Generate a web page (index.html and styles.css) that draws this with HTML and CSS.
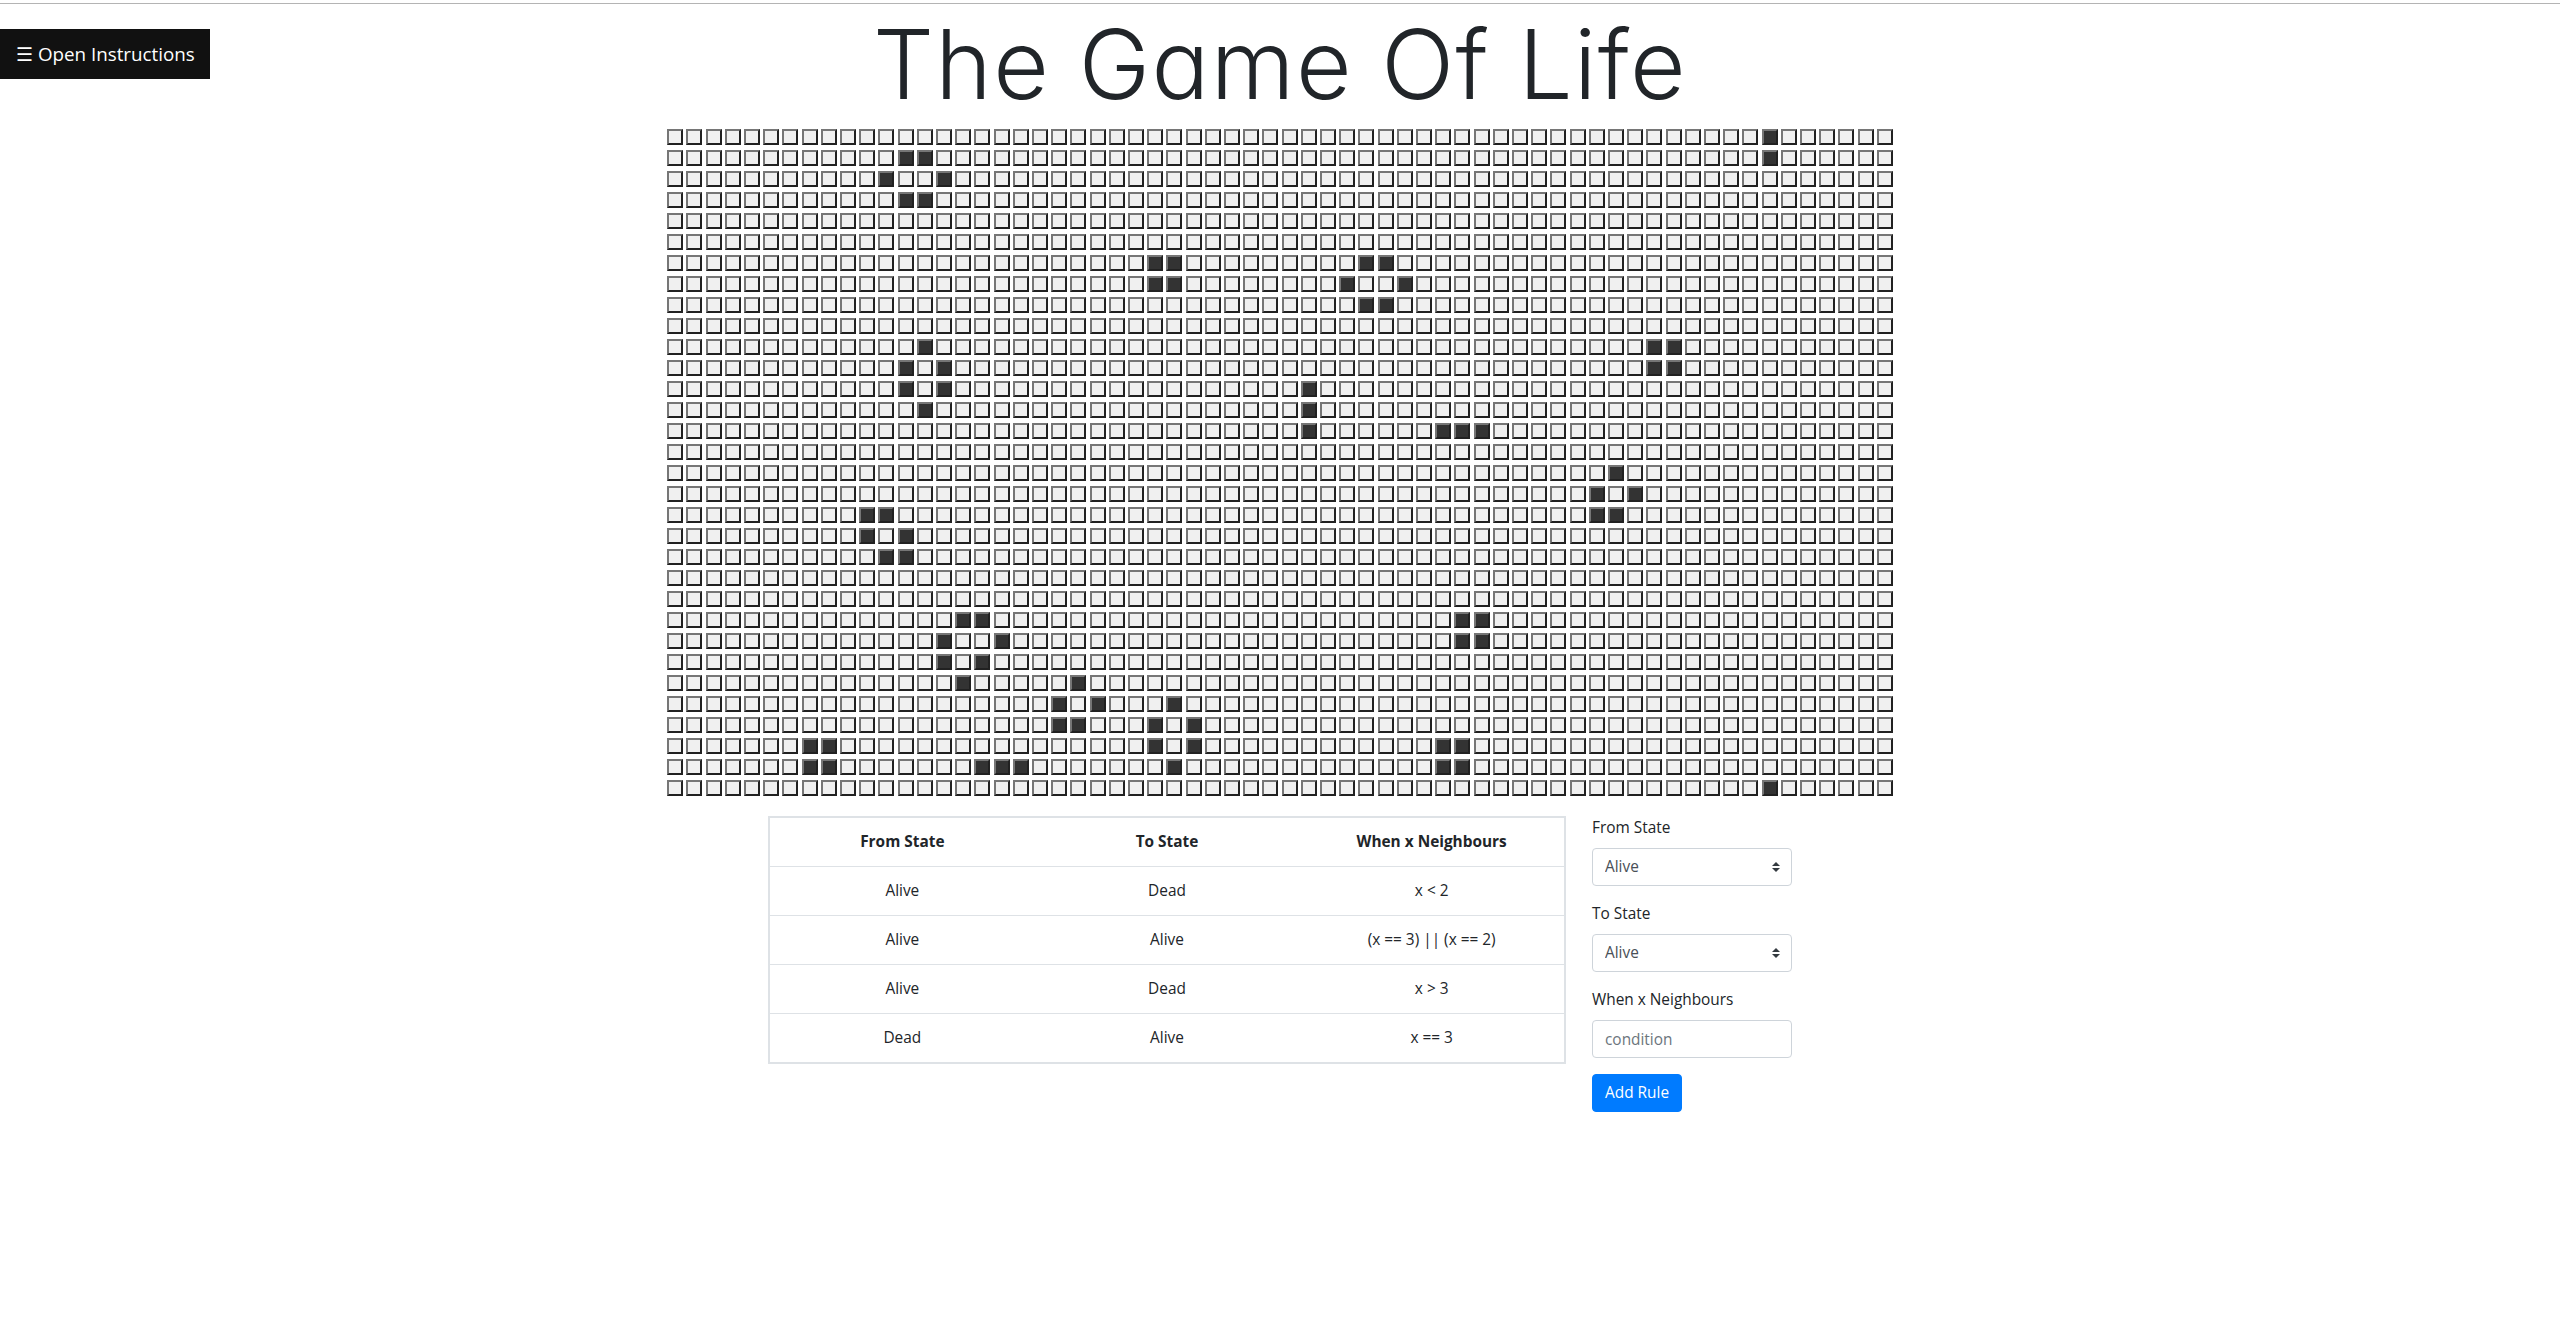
FILE: index.html
```html
<!DOCTYPE html>
<html lang="en">
<head>
<meta charset="utf-8">
<title>The Game Of Life</title>
<link rel="stylesheet" href="styles.css">
</head>
<body>
<div class="topline"></div>
<button class="open-btn" type="button">&#9776; Open Instructions</button>
<h1 class="title">The Game Of Life</h1>
<div class="board" id="board"></div>
<div class="lower">
  <div class="rules">
    <table class="rules-table">
      <thead>
        <tr><th>From State</th><th>To State</th><th>When x Neighbours</th></tr>
      </thead>
      <tbody>
        <tr><td>Alive</td><td>Dead</td><td>x &lt; 2</td></tr>
        <tr><td>Alive</td><td>Alive</td><td>(x == 3) || (x == 2)</td></tr>
        <tr><td>Alive</td><td>Dead</td><td>x &gt; 3</td></tr>
        <tr><td>Dead</td><td>Alive</td><td>x == 3</td></tr>
      </tbody>
    </table>
  </div>
  <form class="rule-form">
    <div class="group">
      <label class="lbl">From State</label>
      <div class="select-wrap">
        <select class="control select"><option>Alive</option><option>Dead</option></select>
        <svg class="arrows" viewBox="0 0 4 5"><path d="M2 0L0 2h4zm0 5L0 3h4z" fill="#343a40"/></svg>
      </div>
    </div>
    <div class="group">
      <label class="lbl">To State</label>
      <div class="select-wrap">
        <select class="control select"><option>Alive</option><option>Dead</option></select>
        <svg class="arrows" viewBox="0 0 4 5"><path d="M2 0L0 2h4zm0 5L0 3h4z" fill="#343a40"/></svg>
      </div>
    </div>
    <div class="group">
      <label class="lbl">When x Neighbours</label>
      <input class="control" type="text" placeholder="condition">
    </div>
    <button class="add-btn" type="button">Add Rule</button>
  </form>
</div>
<script src="script.js"></script>
</body>
</html>
```

FILE: styles.css
```css
html, body {
  margin: 0;
  padding: 0;
  background: #fff;
}
body {
  font-family: "Open Sans", "Noto Sans", sans-serif;
  font-size: 15.4px;
  line-height: 24px;
  color: #212529;
}
.topline {
  margin-top: 3px;
  border-top: 1px solid #b4b4b4;
}
.open-btn {
  position: absolute;
  left: 0;
  top: 29px;
  width: 210px;
  height: 50px;
  margin: 0;
  padding: 0 0 0 16px;
  border: 0;
  background: #111;
  color: #fff;
  font-family: "Open Sans", sans-serif;
  font-size: 18.8px;
  text-align: left;
  cursor: pointer;
}
.title {
  margin: 0 0 7px;
  padding-top: 3px;
  text-align: center;
  font-family: Inter, "Liberation Sans", sans-serif;
  font-weight: 300;
  font-size: 96px;
  line-height: 1.2;
  letter-spacing: 1.4px;
  font-feature-settings: "cv11" 1, "ss02" 0;
  color: #212529;
}
.board {
  display: grid;
  grid-template-columns: repeat(64, 16px);
  grid-auto-rows: 16px;
  column-gap: 3.216px;
  row-gap: 5px;
  justify-content: center;
}
.cell {
  display: block;
  box-sizing: border-box;
  width: 16px;
  height: 16px;
  margin: 0;
  padding: 0;
  border: 2px outset rgb(118, 118, 118);
  background: #f0f0f0;
}
.cell.alive {
  background: #333;
}
.lower {
  display: flex;
  justify-content: center;
  align-items: flex-start;
  gap: 26px;
  margin-top: 20px;
}
.rules {
  width: 798px;
  box-sizing: border-box;
  border: 2px solid #dee2e6;
}
.rules-table {
  width: 100%;
  border-collapse: collapse;
  table-layout: fixed;
}
.rules-table th,
.rules-table td {
  padding: 12px;
  text-align: center;
  line-height: 24px;
  border-top: 1px solid #dee2e6;
}
.rules-table th {
  font-weight: 700;
  border-top: 0;
  border-bottom: 1px solid #dee2e6;
}
.rules-table tbody tr:first-child td {
  border-top: 0;
}
.rule-form {
  width: 200px;
  margin: 0;
}
.group {
  margin-bottom: 16px;
}
.lbl {
  display: block;
  margin-bottom: 8px;
  line-height: 24px;
}
.select-wrap {
  position: relative;
}
.control {
  display: block;
  box-sizing: border-box;
  width: 100%;
  height: 38px;
  margin: 0;
  padding: 6px 12px;
  border: 1px solid #ced4da;
  border-radius: 4px;
  background: #fff;
  font-family: "Open Sans", sans-serif;
  font-size: 15.4px;
  line-height: 24px;
  color: #495057;
  -webkit-appearance: none;
  appearance: none;
  outline: none;
}
.control::placeholder {
  color: #6c757d;
}
.arrows {
  position: absolute;
  right: 12px;
  top: 14px;
  width: 8px;
  height: 10px;
  pointer-events: none;
}
.add-btn {
  display: inline-block;
  margin: 0;
  padding: 6px 12px;
  border: 1px solid #007bff;
  border-radius: 4px;
  background: #007bff;
  color: #fff;
  font-family: "Open Sans", sans-serif;
  font-size: 15.4px;
  line-height: 24px;
  cursor: pointer;
}
```

FILE: script.js
```js
(function () {
  var alive = {
    0: [57],
    1: [12, 13, 57],
    2: [11, 14],
    3: [12, 13],
    6: [25, 26, 36, 37],
    7: [25, 26, 35, 38],
    8: [36, 37],
    10: [13, 51, 52],
    11: [12, 14, 51, 52],
    12: [12, 14, 33],
    13: [13, 33],
    14: [33, 40, 41, 42],
    16: [49],
    17: [48, 50],
    18: [10, 11, 48, 49],
    19: [10, 12],
    20: [11, 12],
    23: [15, 16, 41, 42],
    24: [14, 17, 41, 42],
    25: [14, 16],
    26: [15, 21],
    27: [20, 22, 26],
    28: [20, 21, 25, 27],
    29: [7, 8, 25, 27, 40, 41],
    30: [7, 8, 16, 17, 18, 26, 40, 41],
    31: [57]
  };
  var board = document.getElementById('board');
  var frag = document.createDocumentFragment();
  for (var r = 0; r < 32; r++) {
    var row = alive[r] || [];
    for (var c = 0; c < 64; c++) {
      var b = document.createElement('button');
      b.type = 'button';
      b.className = row.indexOf(c) >= 0 ? 'cell alive' : 'cell';
      frag.appendChild(b);
    }
  }
  board.appendChild(frag);
})();
```
